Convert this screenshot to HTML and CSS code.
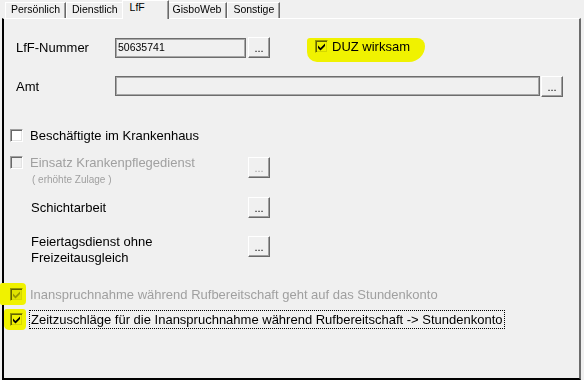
FILE: index.html
```html
<!DOCTYPE html>
<html lang="de">
<head>
    <meta charset="UTF-8">
    <title>LfF</title>
    <link rel="stylesheet" href="styles.css">
</head>
<body>
    <div class="tabs">
        <div class="tab">Persönlich</div>
        <div class="tab">Dienstlich</div>
        <div class="tab active">LfF</div>
        <div class="tab">GisboWeb</div>
        <div class="tab">Sonstige</div>
    </div>

    <div class="panel">
        <div class="row field-row">
            <span class="label">LfF-Nummer</span>
            <div class="input short">50635741</div>
            <button class="dots">...</button>
            <span class="mark duz">
                <span class="box"><svg width="9" height="9" viewBox="0 0 9 9"><polygon points="1,3.5 3.5,6 8,1.5 8,4 3.5,8.5 1,6" fill="#000"/></svg></span>
                <span class="duz-text">DUZ wirksam</span>
            </span>
        </div>

        <div class="row field-row amt">
            <span class="label">Amt</span>
            <div class="input wide"></div>
            <button class="dots near">...</button>
        </div>

        <div class="row check-row krankenhaus">
            <span class="box"></span>
            <span class="check-text">Beschäftigte im Krankenhaus</span>
        </div>

        <div class="row top-row einsatz">
            <div class="left">
                <span class="box disabled"></span>
                <div class="check-text disabled-text">
                    <div>Einsatz Krankenpflegedienst</div>
                    <div class="hint">( erhöhte Zulage )</div>
                </div>
            </div>
            <button class="dots disabled-btn">...</button>
        </div>

        <div class="row schicht">
            <div class="left indent">Schichtarbeit</div>
            <button class="dots">...</button>
        </div>

        <div class="row top-row feiertag">
            <div class="left indent two-lines">Feiertagsdienst ohne<br>Freizeitausgleich</div>
            <button class="dots">...</button>
        </div>

        <div class="row ruf">
            <span class="mark mark-ruf">
                <span class="box disabled"><svg width="9" height="9" viewBox="0 0 9 9"><polygon points="1,3.5 3.5,6 8,1.5 8,4 3.5,8.5 1,6" fill="#a0a0a0"/></svg></span>
            </span>
            <span class="disabled-text ruf-text">Inanspruchnahme während Rufbereitschaft geht auf das Stundenkonto</span>
        </div>

        <div class="row zeit">
            <span class="mark mark-zeit">
                <span class="box"><svg width="9" height="9" viewBox="0 0 9 9"><polygon points="1,3.5 3.5,6 8,1.5 8,4 3.5,8.5 1,6" fill="#000"/></svg></span>
            </span>
            <span class="focus">Zeitzuschläge für die Inanspruchnahme während Rufbereitschaft -&gt; Stundenkonto</span>
        </div>
    </div>
</body>
</html>
```

FILE: styles.css
```css
body {
  margin: 0;
  width: 584px;
  height: 380px;
  overflow: hidden;
  background: #f0f0f0;
  font-family: 'Liberation Sans', Arial, sans-serif;
  font-size: 13px;
  color: #000;
}

/* tab strip */
.tabs {
  display: flex;
  align-items: flex-end;
  height: 18px;
  padding-left: 5px;
}

.tab {
  box-sizing: border-box;
  height: 16px;
  padding: 0 5px 0 5px;
  border-top: 1px solid #fff;
  border-left: 1px solid #fff;
  border-right: 1px solid #696969;
  box-shadow: inset -1px 0 #a0a0a0;
  font-size: 10.5px;
  line-height: 13px;
  white-space: nowrap;
}

.tab.active {
  position: relative;
  z-index: 1;
  width: 47px;
  height: 19px;
  margin: 0 -2px -1px -2px;
  padding-left: 7px;
  line-height: 12px;
  background: #f0f0f0;
}

/* page */
.panel {
  box-sizing: border-box;
  width: 579px;
  height: 362px;
  margin-left: 2px;
  padding: 18px 0 0 6px;
  border-top: 1px solid #fff;
  border-left: 2px solid #000;
  border-right: 2px solid #6b6b6b;
  border-bottom: 2px solid #000;
}

.row {
  display: flex;
  align-items: center;
}

.top-row {
  align-items: flex-start;
}

.field-row {
  height: 21px;
  padding-left: 6px;
  align-items: flex-start;
}

.label {
  width: 99px;
  line-height: 21px;
}

.input {
  box-sizing: border-box;
  height: 20px;
  margin-top: 1px;
  padding: 2px 0 0 2px;
  border: 1px solid #6d6d6d;
  box-shadow: inset 0 0 0 1px #a8a8a8;
  font-size: 10.5px;
  line-height: 12px;
}

.short {
  width: 131px;
}

.wide {
  width: 425px;
  margin-top: 0;
}

.dots {
  box-sizing: border-box;
  display: flex;
  align-items: flex-end;
  justify-content: center;
  flex: none;
  width: 22px;
  height: 21px;
  margin: 0 0 0 2px;
  padding: 0 0 3px 0;
  background: #f0f0f0;
  border: 1px solid;
  border-color: #fff #696969 #696969 #fff;
  box-shadow: inset -1px -1px #a0a0a0;
  font-family: 'Liberation Sans', Arial, sans-serif;
  font-size: 11px;
  line-height: 11px;
  color: #000;
}

.dots.near {
  margin-left: 1px;
}

.dots.disabled-btn {
  color: #a0a0a0;
}

/* checkboxes */
.box {
  box-sizing: border-box;
  display: flex;
  align-items: center;
  justify-content: center;
  flex: none;
  width: 13px;
  height: 13px;
  background: #fff;
  border: 1px solid;
  border-color: #a0a0a0 #fff #fff #a0a0a0;
  box-shadow: inset 1px 1px #696969, inset -1px -1px #e3e3e3;
}

.box.disabled {
  background: #f0f0f0;
}

.box svg {
  display: block;
}

.mark {
  display: flex;
  align-items: center;
  background: #f0f200;
}

.mark .box {
  mix-blend-mode: multiply;
}

.duz {
  align-self: flex-start;
  margin: 1px 0 0 37px;
  padding: 2px 15px 9px 8px;
  border-radius: 3px 8px 16px 10px;
}

.duz-text {
  margin-left: 4px;
  line-height: 13px;
}

.amt {
  margin-top: 18px;
}

.check-text {
  margin-left: 7px;
}

.krankenhaus {
  height: 20px;
  margin-top: 28px;
}

.left {
  display: flex;
  align-items: flex-start;
  width: 236px;
}

.indent {
  box-sizing: border-box;
  padding-left: 21px;
}

.einsatz {
  height: 32px;
  margin-top: 11px;
}

.einsatz .check-text {
  line-height: 13px;
}

.einsatz .dots {
  margin-top: 1px;
}

.disabled-text {
  color: #a0a0a0;
}

.hint {
  margin-top: 5px;
  padding-left: 2px;
  font-size: 10px;
  line-height: 12px;
}

.schicht {
  height: 22px;
  margin-top: 8px;
}

.feiertag {
  height: 32px;
  margin-top: 16px;
}

.two-lines {
  line-height: 16px;
}

.feiertag .dots {
  margin-top: 2px;
}

.ruf {
  height: 22px;
  margin-top: 17px;
}

.mark-ruf {
  height: 22px;
  margin-left: -10px;
  padding: 0 3px 0 10px;
  border-radius: 2px 4px 4px 2px;
}

.ruf-text {
  margin-left: 4px;
}

.zeit {
  height: 21px;
  margin-top: 4px;
}

.mark-zeit {
  height: 21px;
  margin-left: -6px;
  padding: 0 3px 0 6px;
  border-radius: 3px 3px 4px 5px;
}

.focus {
  box-sizing: border-box;
  height: 19px;
  margin-left: 3px;
  padding: 0 1px;
  border: 1px dotted #000;
  line-height: 17px;
  white-space: nowrap;
}
```
